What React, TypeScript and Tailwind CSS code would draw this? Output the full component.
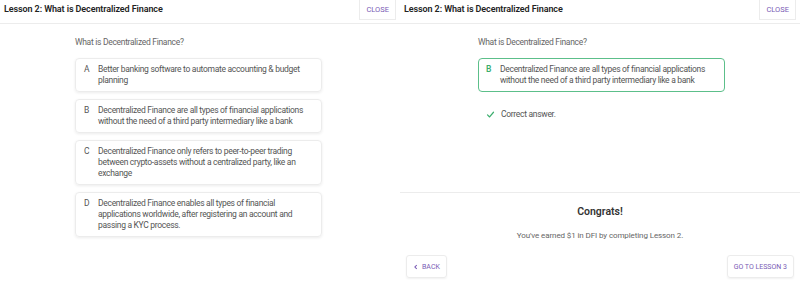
import React from 'react';

const font = { fontFamily: 'Roboto, "Noto Sans", sans-serif' };

const Header = () => (
  <div className="flex justify-between items-start h-[24px] border-b border-[#ececec] pl-1 pr-1">
    <h1 className="text-[9px] font-semibold text-[#222] leading-none pt-[5px] tracking-[-0.1px]">Lesson 2: What is Decentralized Finance</h1>
    <button className="h-[20px] px-[6px] border-x border-b border-[#ececec] text-[7.5px] text-[#7a5bb5]">CLOSE</button>
  </div>
);

const options = [
  { key: 'A', lines: ['Better banking software to automate accounting & budget', 'planning'] },
  { key: 'B', lines: ['Decentralized Finance are all types of financial applications', 'without the need of a third party intermediary like a bank'] },
  { key: 'C', lines: ['Decentralized Finance only refers to peer-to-peer trading', 'between crypto-assets without a centralized party, like an', 'exchange'] },
  { key: 'D', lines: ['Decentralized Finance enables all types of financial', 'applications worldwide, after registering an account and', 'passing a KYC process.'] },
];

const Option = ({ k, lines, correct }: { k: string; lines: string[]; correct?: boolean }) => (
  <div
    className={
      correct
        ? 'flex gap-[7px] rounded-[4px] border-[1.5px] border-[#5cbf8a] px-[7px] py-[5px]'
        : 'flex gap-[7px] rounded-[4px] border border-[#ececec] shadow-[0_1px_3px_rgba(0,0,0,0.08)] px-[8px] py-[5px]'
    }
  >
    <span className={correct ? 'text-[8.5px] leading-[11px] font-semibold text-[#3cae6e] w-[7px] shrink-0' : 'text-[8.5px] leading-[11px] text-[#555] w-[7px] shrink-0'}>{k}</span>
    <p className="text-[8.5px] leading-[11px] tracking-[-0.3px] text-[#555] whitespace-nowrap">
      {lines.map((l, i) => (
        <React.Fragment key={i}>
          {i > 0 && <br />}
          {l}
        </React.Fragment>
      ))}
    </p>
  </div>
);

export default function App() {
  return (
    <div className="flex w-[800px] h-[284px] bg-white" style={font}>
      <div className="w-[400px] flex flex-col">
        <Header />
        <div className="w-[247px] ml-[75px] mt-[12px]">
          <p className="text-[8.5px] tracking-[-0.3px] text-[#666] mb-[9px]">What is Decentralized Finance?</p>
          <div className="flex flex-col gap-[7px]">
            {options.map((o) => (
              <Option key={o.key} k={o.key} lines={o.lines} />
            ))}
          </div>
        </div>
      </div>
      <div className="w-[400px] flex flex-col">
        <Header />
        <div className="w-[247px] ml-[78px] mt-[12px]">
          <p className="text-[8.5px] tracking-[-0.3px] text-[#666] mb-[9px]">What is Decentralized Finance?</p>
          <Option k="B" lines={options[1].lines} correct />
          <div className="flex items-center gap-[6px] ml-[8px] mt-[16px]">
            <svg width="9" height="9" viewBox="0 0 12 12" fill="none" stroke="#3cae6e" strokeWidth="1.6" strokeLinecap="round" strokeLinejoin="round">
              <path d="M2 6.5l2.8 2.8L10 3" />
            </svg>
            <span className="text-[8.5px] tracking-[-0.3px] text-[#555]">Correct answer.</span>
          </div>
        </div>
        <div className="mt-[71px] border-t border-[#ececec] flex flex-col items-center">
          <h2 className="text-[10.5px] font-semibold text-[#333] mt-[11px]">Congrats!</h2>
          <p className="text-[8px] tracking-[-0.1px] text-[#666] mt-[11px]">You've earned $1 in DFI by completing Lesson 2.</p>
          <div className="w-full flex justify-between px-[6px] mt-[13px]">
            <button className="h-[23px] px-[6px] flex items-center gap-[3px] rounded-[3px] border border-[#ececec] shadow-[0_1px_2px_rgba(0,0,0,0.06)] text-[7px] text-[#7a5bb5]">
              <svg width="6" height="6" viewBox="0 0 8 8" fill="none" stroke="#7a5bb5" strokeWidth="1.4"><path d="M5 1.5L2.5 4 5 6.5" /></svg>
              BACK
            </button>
            <button className="h-[23px] px-[6px] rounded-[3px] border border-[#ececec] shadow-[0_1px_2px_rgba(0,0,0,0.06)] text-[7px] text-[#7a5bb5]">GO TO LESSON 3</button>
          </div>
        </div>
      </div>
    </div>
  );
}
